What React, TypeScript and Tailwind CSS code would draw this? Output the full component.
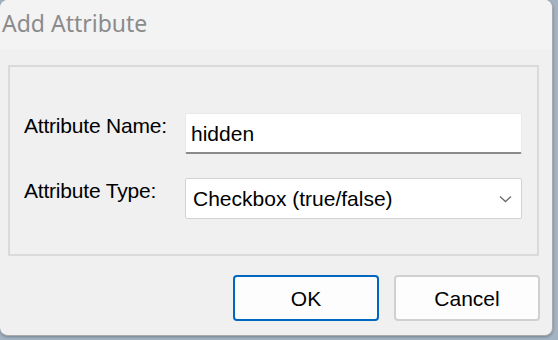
export default function App() {
  return (
    <div className="w-[558px] h-[340px] overflow-hidden bg-[#a3b3c4]">
      <div className="w-[553px] h-[336px] rounded-lg overflow-hidden bg-[#f0f0f0] border-r border-b border-[#a9a9a9] shadow-[0_1px_3px_rgba(0,0,0,0.3)] flex flex-col">
        {/* title bar */}
        <div className="h-[49px] shrink-0 bg-[#f3f3f3] flex items-center pl-[2px]">
          <span className="text-[23px] leading-none text-[#8b8b8b] font-['Noto_Sans',sans-serif] pb-[2px]">
            Add Attribute
          </span>
        </div>

        {/* body */}
        <div className="flex-1 flex flex-col pt-4 pl-2 pr-[12px] font-['Liberation_Sans',Arial,sans-serif] text-[21px] leading-6 text-black">
          <div className="w-[531px] h-[191px] border-2 border-[#dadada] pt-[46px] pl-[14px] flex flex-col gap-6">
            <div className="flex items-start">
              <span className="w-[161px] mt-[1px] tracking-[-0.2px]">Attribute Name:</span>
              <div className="w-[337px] h-[41px] bg-white border border-[#e8e8e8] border-b-2 border-b-[#8a8a8a] rounded-[2px] pl-[5px] pt-[8px]">
                hidden
              </div>
            </div>
            <div className="flex items-start">
              <span className="w-[161px] mt-[1px] tracking-[-0.2px]">Attribute Type:</span>
              <div className="w-[337px] h-[41px] bg-white border border-[#d2d2d2] rounded-[2px] pl-[7px] pt-[8px] pr-[9px] flex items-start justify-between">
                <span>Checkbox (true/false)</span>
                <svg width="13" height="8" viewBox="0 0 13 8" className="mt-[8px]" fill="none">
                  <path d="M1 1.5 L6.5 6.5 L12 1.5" stroke="#6b6b6b" strokeWidth="1.3" />
                </svg>
              </div>
            </div>
          </div>

          <div className="flex justify-end gap-[15px] mt-[19px]">
            <button className="w-[146px] h-[46px] bg-[#fdfdfd] border-2 border-[#0067c0] rounded-[4px] flex items-center justify-center pt-[2px]">
              OK
            </button>
            <button className="w-[146px] h-[46px] bg-[#fdfdfd] border-2 border-[#d0d0d0] rounded-[4px] flex items-center justify-center pt-[2px]">
              Cancel
            </button>
          </div>
        </div>
      </div>
    </div>
  );
}
